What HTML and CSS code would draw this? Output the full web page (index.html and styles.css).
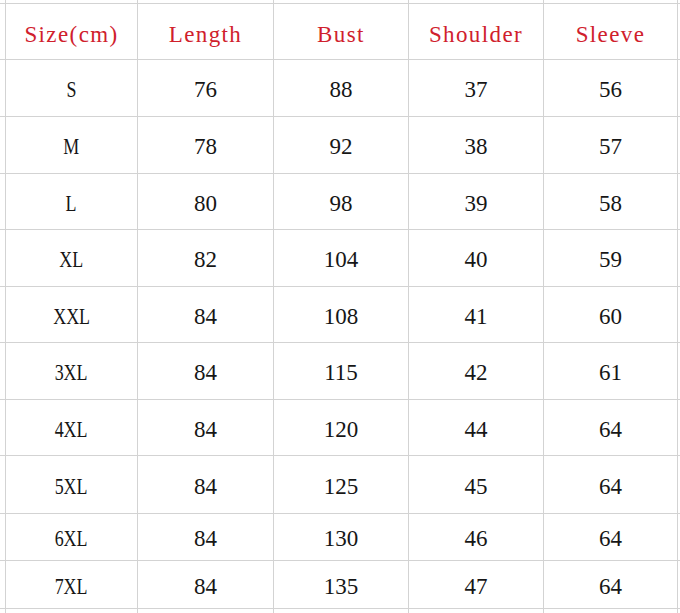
FILE: index.html
```html
<!DOCTYPE html>
<html>
<head>
<meta charset="utf-8">
<link rel="stylesheet" href="styles.css">
</head>
<body>
<div class="sheet">
  <div></div><div></div><div></div><div></div><div></div><div></div><div></div>

  <div></div>
  <div class="cell head">Size(cm)</div>
  <div class="cell head">Length</div>
  <div class="cell head">Bust</div>
  <div class="cell head">Shoulder</div>
  <div class="cell head">Sleeve</div>
  <div></div>

  <div></div><div class="cell"><span class="sz">S</span></div><div class="cell">76</div><div class="cell">88</div><div class="cell">37</div><div class="cell">56</div><div></div>
  <div></div><div class="cell"><span class="sz">M</span></div><div class="cell">78</div><div class="cell">92</div><div class="cell">38</div><div class="cell">57</div><div></div>
  <div></div><div class="cell"><span class="sz">L</span></div><div class="cell">80</div><div class="cell">98</div><div class="cell">39</div><div class="cell">58</div><div></div>
  <div></div><div class="cell"><span class="sz">XL</span></div><div class="cell">82</div><div class="cell">104</div><div class="cell">40</div><div class="cell">59</div><div></div>
  <div></div><div class="cell"><span class="sz">XXL</span></div><div class="cell">84</div><div class="cell">108</div><div class="cell">41</div><div class="cell">60</div><div></div>
  <div></div><div class="cell"><span class="sz">3XL</span></div><div class="cell">84</div><div class="cell">115</div><div class="cell">42</div><div class="cell">61</div><div></div>
  <div></div><div class="cell"><span class="sz">4XL</span></div><div class="cell">84</div><div class="cell">120</div><div class="cell">44</div><div class="cell">64</div><div></div>
  <div></div><div class="cell"><span class="sz">5XL</span></div><div class="cell">84</div><div class="cell">125</div><div class="cell">45</div><div class="cell">64</div><div></div>
  <div></div><div class="cell"><span class="sz">6XL</span></div><div class="cell">84</div><div class="cell">130</div><div class="cell">46</div><div class="cell">64</div><div></div>
  <div></div><div class="cell"><span class="sz">7XL</span></div><div class="cell">84</div><div class="cell">135</div><div class="cell">47</div><div class="cell">64</div><div></div>

  <div></div><div></div><div></div><div></div><div></div><div></div><div></div>
</div>
</body>
</html>
```

FILE: styles.css
```css
html, body {
  margin: 0;
  padding: 0;
  background: #ffffff;
}

body {
  width: 680px;
  height: 613px;
  overflow: hidden;
}

.sheet {
  display: grid;
  grid-template-columns: 5px 131px 135px 134px 134px 133px 2px;
  grid-template-rows: 3px 55px 56px 56px 55px 56px 55px 56px 55px 57px 46px 47px 4px;
  gap: 1px;
  background: #d3d3d3;
  width: 680px;
  height: 613px;
}

.sheet > div {
  background: #ffffff;
}

.cell {
  display: flex;
  align-items: center;
  justify-content: center;
  font-family: "Liberation Serif", "Times New Roman", serif;
  font-size: 23px;
  color: #161616;
  padding-top: 4px;
  box-sizing: border-box;
}

.head {
  font-size: 23px;
  letter-spacing: 1.4px;
  color: #d0202c;
  padding-top: 6px;
}

.sz {
  display: inline-block;
  transform: scaleX(0.78);
}
```
